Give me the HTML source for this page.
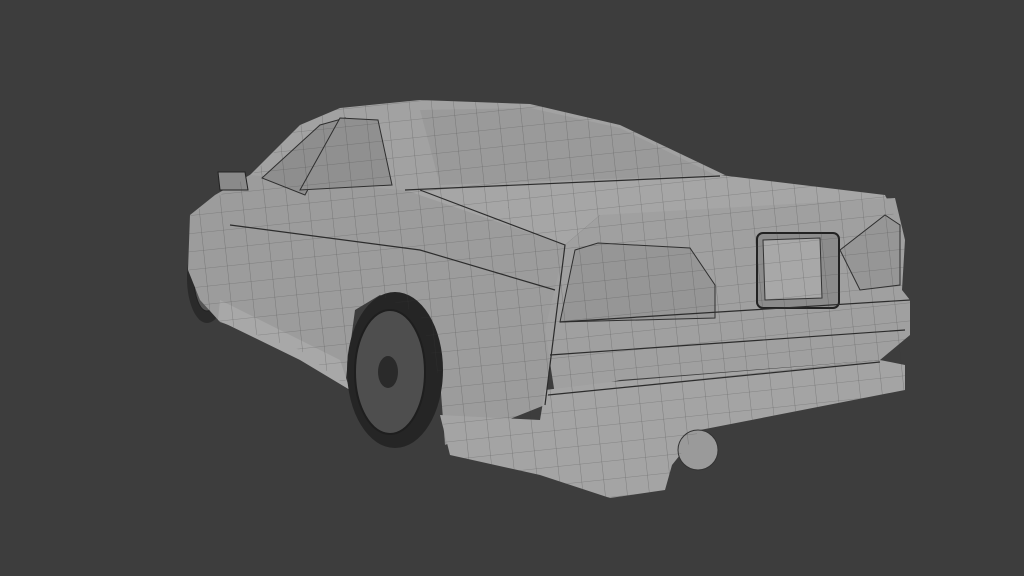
<!DOCTYPE html>
<html><head><meta charset="utf-8"><style>html,body{margin:0;padding:0;background:#3d3d3d;width:1024px;height:576px;overflow:hidden}</style></head>
<body>
<svg width="1024" height="576" viewBox="0 0 1024 576" xmlns="http://www.w3.org/2000/svg">
<defs>
<pattern id="g" width="22" height="18" patternUnits="userSpaceOnUse" patternTransform="rotate(-6)">
<path d="M0 0H22M0 0V18" stroke="#3a3a3a" stroke-width="0.6" fill="none" opacity="0.6"/>
</pattern>
</defs>
<rect width="1024" height="576" fill="#3d3d3d"/>
<!-- front wheel -->
<ellipse cx="207" cy="278" rx="20" ry="45" fill="#2a2a2a"/>
<ellipse cx="207" cy="278" rx="13" ry="33" fill="#555" stroke="#222"/>
<!-- side body -->
<polygon points="190,215 215,195 255,172 420,188 565,245 555,320 545,405 445,445 440,380 420,315 380,295 355,310 345,385 300,350 220,322 200,300 188,270" fill="#9c9c9c"/>
<!-- cabin -->
<polygon points="250,175 300,125 340,108 420,100 530,104 620,125 725,175 420,192" fill="#a2a2a2"/>
<polygon points="420,110 530,108 620,128 715,175 440,185" fill="#9a9a9a"/>
<polygon points="262,178 320,125 345,118 305,195" fill="#8e8e8e" stroke="#2e2e2e"/>
<polygon points="300,190 340,118 378,120 392,185" fill="#909090" stroke="#2e2e2e"/>
<!-- trunk -->
<polygon points="405,190 720,175 885,195 895,215 600,215 565,245" fill="#a6a6a6"/>
<!-- rear face -->
<polygon points="565,245 600,215 895,198 905,240 902,290 910,300 910,335 880,360 620,380 555,395 545,330" fill="#a0a0a0"/>
<!-- lights -->
<polygon points="575,250 598,243 690,248 715,285 715,318 560,322" fill="#969696" stroke="#2e2e2e"/>
<polygon points="840,250 885,215 900,225 900,285 860,290" fill="#969696" stroke="#2e2e2e"/>
<rect x="757" y="233" width="82" height="75" rx="6" fill="#8c8c8c" stroke="#222" stroke-width="2"/>
<polygon points="763,240 820,238 822,298 765,300" fill="#a8a8a8" stroke="#333"/>
<!-- bumper lower -->
<polygon points="545,390 610,382 880,360 905,365 905,390 700,430 672,465 665,490 610,498 540,475 450,455 440,415 540,420" fill="#a4a4a4"/>
<ellipse cx="698" cy="450" rx="20" ry="20" fill="#9a9a9a" stroke="#333"/>
<!-- side skirt -->
<polygon points="220,300 340,360 350,390 300,360 218,320" fill="#a8a8a8"/>
<!-- rear wheel -->
<ellipse cx="395" cy="370" rx="48" ry="78" fill="#252525"/>
<ellipse cx="390" cy="372" rx="35" ry="62" fill="#4e4e4e" stroke="#1e1e1e" stroke-width="2"/>
<ellipse cx="388" cy="372" rx="10" ry="16" fill="#2a2a2a"/>
<!-- mirror -->
<polygon points="218,172 245,172 248,190 220,190" fill="#8a8a8a" stroke="#222"/>
<!-- wire overlay -->
<polygon points="190,215 255,172 300,125 340,108 420,100 530,104 620,125 725,175 885,195 905,240 902,290 910,300 910,335 905,390 700,430 672,465 665,490 610,498 540,475 450,455 445,445 440,380 420,315 380,295 355,310 345,385 300,350 220,322 200,300 188,270" fill="url(#g)"/>
<g stroke="#2c2c2c" stroke-width="1.2" fill="none">
<path d="M420 190 L565 245 L545 405"/>
<path d="M560 322 L910 300"/>
<path d="M550 355 L905 330"/>
<path d="M548 395 L880 362"/>
<path d="M230 225 L420 250 L555 290"/>
<path d="M405 190 L720 176"/>
</g>
</svg>
</body></html>
